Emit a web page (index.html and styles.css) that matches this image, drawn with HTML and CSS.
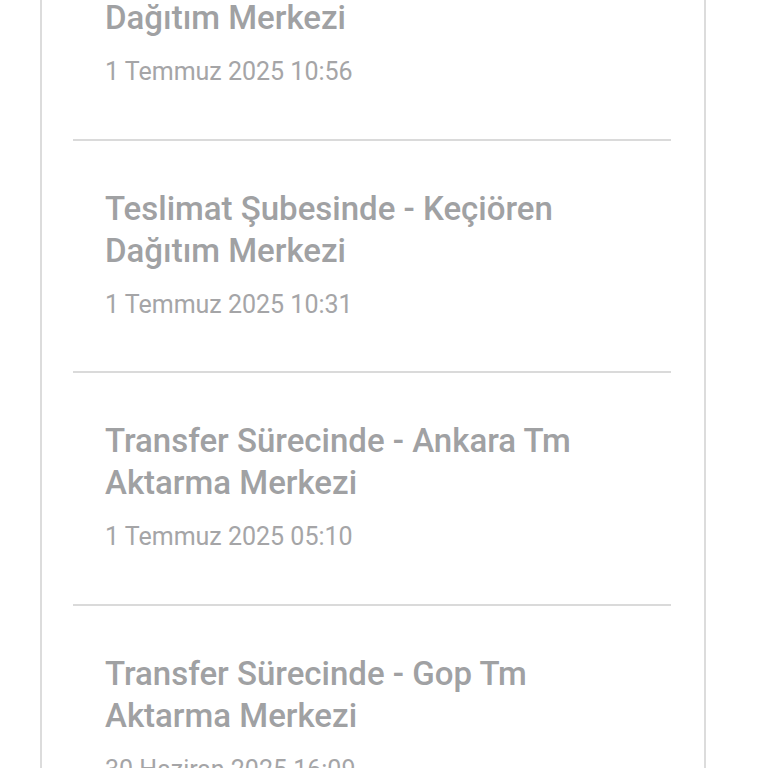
FILE: index.html
```html
<!DOCTYPE html>
<html lang="tr">
<head>
<meta charset="utf-8">
<link rel="stylesheet" href="styles.css">
</head>
<body>
<div class="card">
  <div class="item">
    <div class="title">Dağıtıma Çıkarıldı - Keçiören Dağıtım Merkezi</div>
    <div class="date">1 Temmuz 2025 10:56</div>
  </div>
  <div class="item">
    <div class="title">Teslimat Şubesinde - Keçiören Dağıtım Merkezi</div>
    <div class="date">1 Temmuz 2025 10:31</div>
  </div>
  <div class="item">
    <div class="title">Transfer Sürecinde - Ankara Tm Aktarma Merkezi</div>
    <div class="date">1 Temmuz 2025 05:10</div>
  </div>
  <div class="item">
    <div class="title">Transfer Sürecinde - Gop Tm Aktarma Merkezi</div>
    <div class="date">30 Haziran 2025 16:09</div>
  </div>
</div>
</body>
</html>
```
FILE: styles.css
```css
*, *::before, *::after {
  box-sizing: border-box;
}
html, body {
  margin: 0;
  padding: 0;
  background: #ffffff;
  font-family: Roboto, "Noto Sans", sans-serif;
  overflow: hidden;
}
.card {
  margin: -92px 0 0 40px;
  width: 666px;
  border-left: 2px solid #dcdcdc;
  border-right: 2px solid #dcdcdc;
  padding: 0 33px 0 31px;
  background: #fff;
}
.item {
  padding: 47px 32px 51.5px;
  border-bottom: 2px solid #dadada;
}
.title {
  font-size: 33px;
  font-weight: 500;
  line-height: 42px;
  color: #a0a1a3;
}
.date {
  margin-top: 18px;
  font-size: 25px;
  line-height: 30px;
  color: #a5a5a7;
}
```
